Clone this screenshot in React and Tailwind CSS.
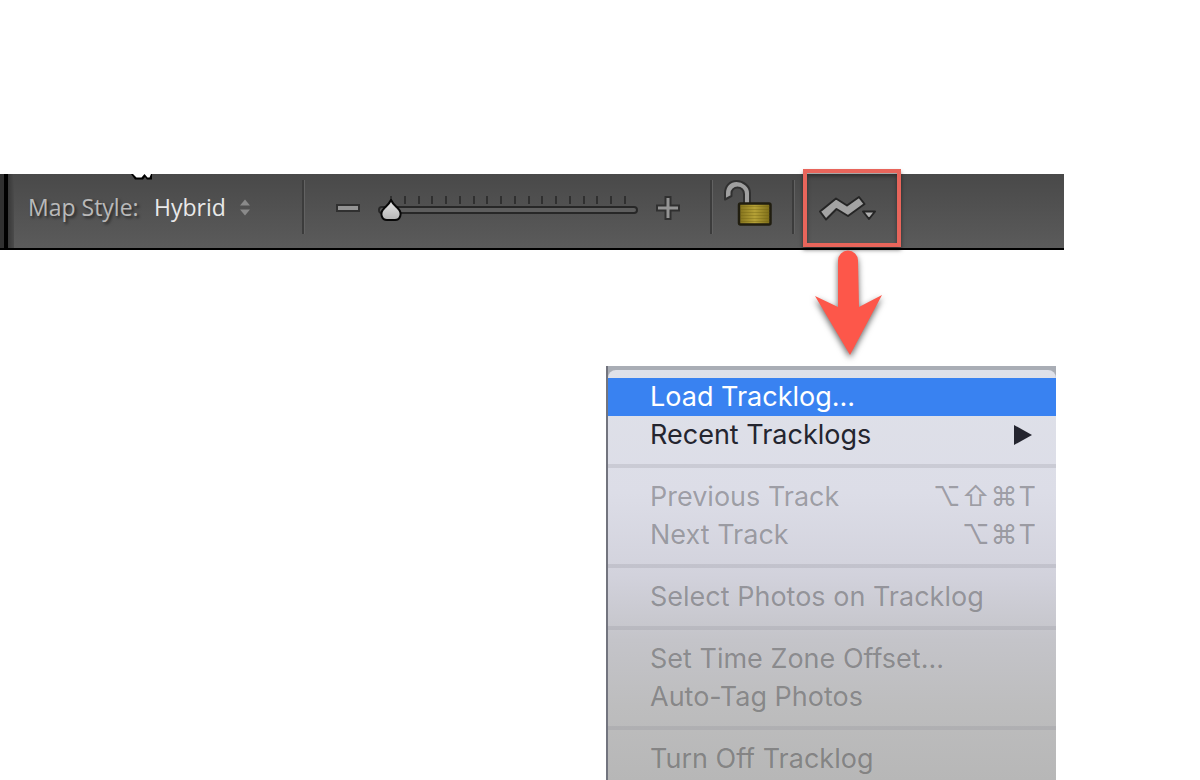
import { useState } from "react";

function Divider() {
  return <div className="h-[54px] w-[3px] shrink-0 border-l-2 border-[#3c3c3c] bg-[#626262]" />;
}

function MapStyle() {
  return (
    <div className="flex w-[288px] shrink-0 items-center pl-[14px] text-[23px] [text-shadow:2px_2px_3px_rgba(0,0,0,0.55)]">
      <label htmlFor="map-style" className="w-[126px] whitespace-nowrap text-[#b9b9b9]">
        Map Style:
      </label>
      <select
        id="map-style"
        defaultValue="Hybrid"
        className="w-[85px] appearance-none bg-transparent text-[#e9e9e9] outline-none"
      >
        <option>Hybrid</option>
        <option>Road Map</option>
        <option>Satellite</option>
        <option>Terrain</option>
      </select>
      <svg className="pointer-events-none h-[17px] w-[12px]" viewBox="0 0 12 17" aria-hidden="true">
        <path d="M1 6.500 6 .5l5 6z" fill="#8a8a8a" />
        <path d="M1 10.500h10l-5 6z" fill="#8a8a8a" />
      </svg>
    </div>
  );
}

const TICKS = Array.from({ length: 18 }, (_, i) => Math.round(13 + i * 13.76));

function ZoomSlider() {
  const [value, setValue] = useState(0);
  const step = (d) => setValue((v) => Math.min(17, Math.max(0, v + d)));
  return (
    <div className="flex w-[405px] shrink-0 items-center pl-[30px]">
      <button type="button" aria-label="Zoom out" onClick={() => step(-1)}>
        <svg className="block h-[26px] w-[26px]" viewBox="0 0 26 26">
          <rect x="2" y="11" width="22" height="6" fill="#949494" stroke="#303030" strokeWidth="2" />
        </svg>
      </button>
      <div className="relative ml-[17px] h-[26px] w-[260px]">
        <svg className="block h-[26px] w-[260px] overflow-visible" viewBox="0 0 260 26" aria-hidden="true">
          <defs>
            <linearGradient id="drop" x1="0" y1="0" x2="0" y2="1">
              <stop offset="0" stopColor="#e8e8e8" />
              <stop offset="1" stopColor="#b4b4b4" />
            </linearGradient>
          </defs>
          {TICKS.map((x) => (
            <path key={x} d={`M${x} 2v8`} stroke="#303030" strokeWidth="2" />
          ))}
          <rect x="1" y="13" width="258" height="6" rx="3" fill="#5e5e5e" stroke="#272727" strokeWidth="2" />
          <g transform={`translate(${value * 13.76} 0)`}>
            <path
              d="M13 6c1.500 3.500 4 5.500 7 8.500 5 5 2 11.500-3 11.500H9c-5 0-8-6.500-3-11.500 3-3 5.500-5 7-8.500z"
              fill="url(#drop)"
              stroke="#080808"
              strokeWidth="2"
              strokeLinejoin="round"
            />
          </g>
        </svg>
        <input
          type="range"
          min="0"
          max="17"
          value={value}
          onChange={(e) => setValue(Number(e.target.value))}
          aria-label="Zoom level"
          className="absolute inset-0 m-0 h-full w-full opacity-0"
        />
      </div>
      <button type="button" aria-label="Zoom in" className="ml-[17px]" onClick={() => step(1)}>
        <svg className="block h-[26px] w-[26px]" viewBox="0 0 26 26">
          <path
            d="M10.500 3h5v8.500H24v5h-8.500V25h-5v-8.500H2v-5h8.500z"
            fill="#949494"
            stroke="#303030"
            strokeWidth="2"
          />
        </svg>
      </button>
    </div>
  );
}

function LockButton() {
  return (
    <div className="flex w-[79px] shrink-0 pl-[8px]">
      <button type="button" aria-label="Unlock markers">
        <svg className="block h-[54px] w-[52px]" viewBox="0 0 52 54">
          <defs>
            <linearGradient id="brass" x1="0" y1="0" x2="1" y2="0">
              <stop offset="0" stopColor="#83721c" />
              <stop offset=".5" stopColor="#b5a136" />
              <stop offset="1" stopColor="#7c6c18" />
            </linearGradient>
          </defs>
          <path
            d="M4 19.500V13.500C4 6 9 1 15.500 1S29 6 29 13v12h-6V14c0-4-3-6.500-6.500-6.500S10.500 10 10.500 13v3z"
            fill="#a0a0a0"
            stroke="#303030"
            strokeWidth="2"
            strokeLinejoin="round"
          />
          <rect x="18" y="23.500" width="31.500" height="21" rx="1.500" fill="url(#brass)" stroke="#211e10" strokeWidth="2.500" />
          <path
            d="M19.500 26.500h29M19.500 29.500h29M19.500 32.500h29M19.500 35.500h29M19.500 38.500h29M19.500 41.500h29"
            stroke="#6c5e12"
            strokeOpacity=".35"
          />
        </svg>
      </button>
    </div>
  );
}

function TracklogButton() {
  return (
    <button
      type="button"
      aria-label="GPS tracklogs"
      aria-haspopup="menu"
      className="relative ml-[8px] flex h-full w-[98px] shrink-0 items-center pl-[15px]"
    >
      <svg className="h-[28px] w-[60px]" viewBox="0 0 60 28" aria-hidden="true">
        <path
          d="M2 18.500 18 5.500 29 12.500 41 4l5.500 7L30 23 18.500 16 8 26.500z"
          fill="#a3a3a3"
          stroke="#252525"
          strokeWidth="2"
          strokeLinejoin="round"
        />
        <path d="M45 18.500h12l-6 7.500z" fill="#b0b0b0" stroke="#252525" strokeWidth="2" strokeLinejoin="round" />
      </svg>
      <span className="pointer-events-none absolute -top-[5px] left-0 h-[78px] w-[98px] border-4 border-[#e8655b] shadow-[0_3px_4px_rgba(0,0,0,0.5),inset_0_3px_4px_rgba(0,0,0,0.4)]" />
    </button>
  );
}

function Toolbar() {
  return (
    <div className="relative mr-[136px] flex h-[76px] border-b-2 border-black bg-linear-to-b from-[#494949] to-[#5b5b5b]">
      <div className="w-[8px] shrink-0 border-r-4 border-black bg-[#303030]" />
      <div className="w-[6px] shrink-0 bg-linear-to-r from-[#383838] to-[#4b4b4b]" />
      <svg className="absolute top-0 left-[130px] h-[8px] w-[24px]" viewBox="0 0 24 8" aria-hidden="true">
        <path d="M1 0 5 5.500h8l2-2.500 2 2.500h5V0z" fill="#000" />
        <path d="M3 0l3.500 3.500h5L14.500 0l3 3.500h2L21 0z" fill="#fff" />
      </svg>
      <div className="flex h-[66px] items-center">
        <MapStyle />
        <Divider />
        <ZoomSlider />
        <Divider />
        <LockButton />
        <Divider />
        <TracklogButton />
      </div>
    </div>
  );
}

function MenuItem({ label, keys, submenu, active, disabled }) {
  return (
    <button
      type="button"
      role="menuitem"
      disabled={disabled}
      className={
        "flex h-[38px] w-full items-center justify-between pr-[20px] pl-[42px] text-left " +
        (active ? "bg-[#3982f1] text-white" : disabled ? "text-black/30" : "text-[#24252f]")
      }
    >
      <span>{label}</span>
      {submenu && (
        <svg className="mr-[4px] h-[20px] w-[18px]" viewBox="0 0 18 20" aria-hidden="true">
          <path d="M0 0 18 10 0 20z" fill="currentColor" />
        </svg>
      )}
      {keys && (
        <span className="flex gap-px">
          {keys.map((k) => (
            <kbd key={k} className="font-[Inter,'DejaVu_Sans',sans-serif]">
              {k}
            </kbd>
          ))}
        </span>
      )}
    </button>
  );
}

function Separator() {
  return (
    <div role="separator" className="py-[10px]">
      <div className="h-[4px] bg-[#80808c]/20" />
    </div>
  );
}

function TracklogMenu() {
  return (
    <div className="mr-[144px] ml-[606px] border-l-2 border-[#72747e] bg-[#a9adb5] pt-[4px]">
      <div
        role="menu"
        aria-label="Tracklog"
        className="rounded-t-[8px] bg-[linear-gradient(#dfe1e9,#dcdde7_30%,#d2d2dc_50%,#c4c4c9_66%,#bdbdbe_82%,#b7b7b7)] pt-[8px] pb-[2px] text-[27px] leading-[38px]"
      >
        <MenuItem label="Load Tracklog..." active />
        <MenuItem label="Recent Tracklogs" submenu />
        <Separator />
        <MenuItem label="Previous Track" keys={["⌥", "⇧", "⌘", "T"]} disabled />
        <MenuItem label="Next Track" keys={["⌥", "⌘", "T"]} disabled />
        <Separator />
        <MenuItem label="Select Photos on Tracklog" disabled />
        <Separator />
        <MenuItem label="Set Time Zone Offset..." disabled />
        <MenuItem label="Auto-Tag Photos" disabled />
        <Separator />
        <MenuItem label="Turn Off Tracklog" disabled />
      </div>
    </div>
  );
}

export default function App() {
  return (
    <main className="min-h-screen bg-white pt-[174px] font-[Inter,'Liberation_Sans',sans-serif]">
      <div className="font-['Open_Sans','Noto_Sans',sans-serif]">
        <Toolbar />
      </div>
      <svg
        className="ml-[806px] block h-[116px] w-[90px] drop-shadow-[0_3px_3px_rgba(0,0,0,0.6)]"
        viewBox="0 0 90 116"
        aria-hidden="true"
      >
        <path d="M32 10.500a10 10 0 0 1 20 0L53 57l23-12L44 105 9 46l23 11z" fill="#fd574a" />
      </svg>
      <TracklogMenu />
    </main>
  );
}
